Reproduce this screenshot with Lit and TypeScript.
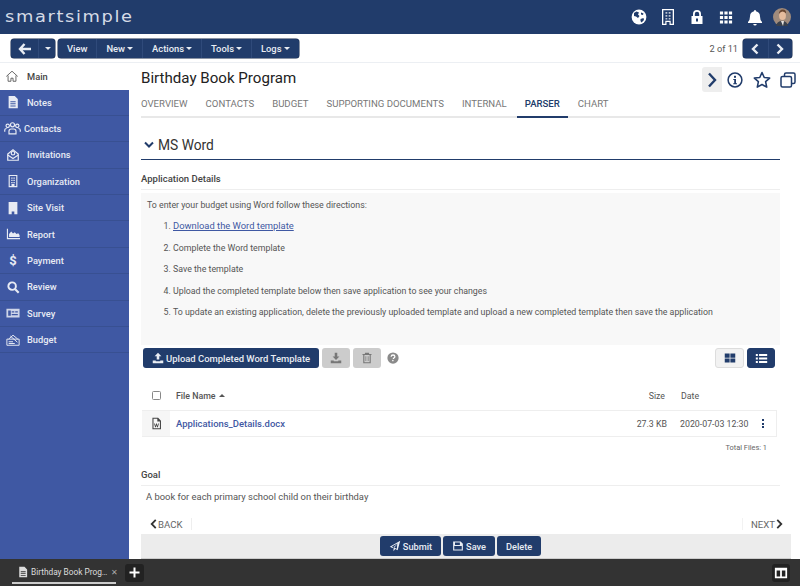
import { LitElement, html, css, svg } from 'lit';
import { customElement } from 'lit/decorators.js';

const icons: Record<string, unknown> = {
  home: svg`<path d="M1.500 8.500 8 2.500l6.500 6M3.500 7.500V14h3.300v-3.500h2.400V14h3.300V7.500" fill="none" stroke="currentColor" stroke-width=".9"/>`,
  notes: svg`<path fill-rule="evenodd" d="M3 1h7l3.500 3.500V15H3zM5 7v1.200h6V7zm0 2.500v1.200h6V9.500zM5 12v1h6v-1z" fill="currentColor"/>`,
  contacts: svg`<g fill="none" stroke="currentColor" stroke-width="1.100"><circle cx="3.500" cy="5.500" r="1.600"/><circle cx="8" cy="4.500" r="1.900"/><circle cx="12.500" cy="5.500" r="1.600"/><path d="M.7 11V9.500q0-1.500 1.800-1.500M15.300 11V9.500q0-1.500-1.800-1.500M4.700 13v-2.500Q4.700 8.500 6.700 8.500h2.600q2 0 2 2V13z"/></g>`,
  invite: svg`<g fill="none" stroke="currentColor" stroke-width="1.400"><path d="M2 7v7h12V7L8 2z"/><path d="m2 8 6 4 6-4"/><circle cx="8" cy="6" r="2"/></g>`,
  org: svg`<path fill-rule="evenodd" d="M3 1h10v14H3zM4.300 2.300V13.700h2V11.500h3.400v2.200h2V2.300zM6 4h1.500v1.500H6zm2.500 0H10v1.500H8.500zM6 6.500h1.500V8H6zm2.500 0H10V8H8.500zM6 9h1.500v1.500H6zm2.500 0H10v1.500H8.500z" fill="currentColor"/>`,
  visit: svg`<path d="M3 1h10v14H9.500v-3h-3v3H3z" fill="currentColor"/>`,
  report: svg`<path d="M1 2h1.300v10.700H16V14H1zM3.500 11.500V8l2.500-3 2 2.500 2-1.500 2 2 2-1 1.500 2v2.500z" fill="currentColor"/>`,
  search: svg`<circle cx="7" cy="7" r="4.300" fill="none" stroke="currentColor" stroke-width="2.200"/><path d="m10.500 10.500 4 4" stroke="currentColor" stroke-width="2.500"/>`,
  survey: svg`<path fill-rule="evenodd" d="M.5 3h15v10H.5zM2.500 5v6h3V5zm4 1v1.500h3V6zm4 0v1.500h3V6zm-4 3v1.500h7V9z" fill="currentColor" opacity=".85"/>`,
  budget: svg`<g fill="none" stroke="currentColor" stroke-width="1.100"><path d="M1 7h14v7H1zM3 7l5-4.500L13.500 7M5 3.500l8 7M3 10h5M3 12h7"/></g>`,
  upload: svg`<path d="M8 1 3.500 5.500H6.300V10h3.400V5.500h2.800zM1 11.300h4v1h6v-1h4V15H1z" fill="currentColor"/>`,
  download: svg`<path d="M6.300 1h3.400v5h2.800L8 10.500 3.500 6h2.800zM1 11.300h4v1h6v-1h4V15H1z" fill="currentColor"/>`,
  trash: svg`<path fill-rule="evenodd" d="M5.500 1h5l.5 1.500h3V4h-1v11H3V4H2V2.500h3zM4.500 4v9.500h7V4zM6 5.500h1v6.500H6zm3 0h1v6.500H9z" fill="currentColor"/>`,
  help: svg`<circle cx="8" cy="8" r="7.500" fill="currentColor"/><path d="M5.500 6.300Q5.700 4 8 4q2.500 0 2.500 2.100 0 1.200-1.300 1.900-.7.400-.7 1.300" fill="none" stroke="#fff" stroke-width="1.700"/><rect x="6.900" y="10.500" width="1.800" height="1.800" fill="#fff"/>`,
  grid: svg`<path d="M1 2h6.500v5.500H1zm7.500 0H15v5.500H8.500zM1 8.500h6.500V14H1zm7.500 0H15V14H8.500z" fill="currentColor"/>`,
  list: svg`<path d="M1 2.500h2.500V5H1zm4 0h10V5H5zM1 6.800h2.500v2.500H1zm4 0h10v2.500H5zM1 11h2.500v2.500H1zM5 11h10v2.500H5z" fill="currentColor"/>`,
  word: svg`<path fill-rule="evenodd" d="M3 1h7l3.500 3.500V15H3zM4.300 2.300v11.400h7.900V5.500H9V2.300zM5 8h1l.8 3 .7-3h1l.7 3 .8-3h1l-1.300 4.500h-1L8 9.800l-.7 2.700h-1z" fill="currentColor"/>`,
  send: svg`<path fill-rule="evenodd" d="M15 1 1 9l3.500 1.500L12 4.500 6 11.300V15l2.300-3 3.200 1.500zM3.800 8.800 11 4.800 10.500 11.800 7.300 10.400z" fill="currentColor"/>`,
  save: svg`<path fill-rule="evenodd" d="M1.500 2h10L14.500 5v9h-13zM4 3.300V6.500h6.500V3.300zM3 8v4.700h10V8z" fill="currentColor"/>`,
  doc: svg`<path fill-rule="evenodd" d="M3 1h7l3.500 3.500V15H3zM5 7v1.200h6.500V7zm0 2.500v1.200h6.500V9.500zM5 12v1h6.500v-1z" fill="currentColor"/>`,
  columns: svg`<path fill-rule="evenodd" d="M1 2h14v12H1zM3 5v7h4V5zm6 0v7h4V5z" fill="currentColor"/>`,
  globe: svg`<circle cx="8" cy="8" r="7.400" fill="currentColor"/><path d="M3 4l2.500-1.500L8 3.500 7 5.500 8.500 7 7 9 5 7.500 3 7zM9.500 10l3-1 .5 2-2.500 2.500-1-1.500zM10 3.500l2.500 1L12 6l-2-.5z" fill="#213c6b"/>`,
  building: svg`<path fill-rule="evenodd" d="M2 0h12v16H9.500v-3h-3v3H2zM3.300 1.300v13.400h2v-3h5.400v3h2V1.300z" fill="currentColor"/><path d="M5.500 3h1.800v1.800H5.500zm3.200 0h1.800v1.800H8.700zM5.500 6h1.800v1.800H5.500zm3.200 0h1.800v1.800H8.700zM5.500 9h1.800v1.500H5.500zm3.200 0h1.800v1.500H8.700z" fill="currentColor" opacity=".7"/>`,
  lock: svg`<path fill-rule="evenodd" d="M4 7V5a4 4 0 0 1 8 0v2h1.500v8h-11V7zm1.800 0h4.400V5a2.200 2.200 0 0 0-4.400 0zM7 9.500V12.500h2V9.500z" fill="currentColor"/>`,
  apps: svg`<path d="M1.500 1.500h3.400v3.400H1.500zm4.800 0h3.400v3.400H6.300zm4.800 0h3.400v3.400h-3.400zM1.500 6.300h3.400v3.400H1.500zm4.800 0h3.400v3.400H6.300zm4.800 0h3.400v3.400h-3.400zM1.500 11.100h3.400v3.400H1.500zm4.800 0h3.400v3.400H6.300zm4.800 0h3.400v3.400h-3.400z" fill="currentColor"/>`,
  bell: svg`<path d="M8 .5q1 0 1 1.200 4 .8 4 5.300 0 3.500 2 5.500v1H1v-1q2-2 2-5.500 0-4.500 4-5.300Q7 .5 8 .5zM6.200 14.500h3.600Q9.500 16 8 16t-1.800-1.500z" fill="currentColor"/>`,
  info: svg`<circle cx="8" cy="8" r="6.900" fill="none" stroke="currentColor" stroke-width="1.500"/><rect x="7" y="3.800" width="2" height="2" fill="currentColor"/><path d="M6.300 7h2.700v4.200h1v1.100H6.200v-1.100h1V8.100h-.9z" fill="currentColor"/>`,
  star: svg`<path d="m8 1.300 2 4.500 4.800.5-3.600 3.200 1 4.800L8 12l-4.200 2.300 1-4.800L1.200 6.300 6 5.800z" fill="none" stroke="currentColor" stroke-width="1.400" stroke-linejoin="round"/>`,
  copy: svg`<g fill="none" stroke="currentColor" stroke-width="1.500"><rect x="1" y="4.500" width="10.500" height="10.500" rx="1.500"/><path d="M4.500 4.500V2.500q0-1.500 1.500-1.500h7.500Q15 1 15 2.500V10q0 1.500-1.500 1.500h-2"/></g>`,
};

const icon = (name: string, size = 14) =>
  html`<svg class="ic" width=${size} height=${size} viewBox="0 0 16 16">${icons[name]}</svg>`;

const chevL = (w = 2.4) => html`<svg class="ic" width="10" height="12" viewBox="0 0 10 12"><path d="M7.500 1.500 3 6l4.500 4.500" fill="none" stroke="currentColor" stroke-width=${w}/></svg>`;
const chevR = (w = 2.4) => html`<svg class="ic" width="10" height="12" viewBox="0 0 10 12"><path d="M2.500 1.500 7 6l-4.500 4.500" fill="none" stroke="currentColor" stroke-width=${w}/></svg>`;
const caret = html`<span class="caret"></span>`;

const NAV: [string, string | null, boolean?][] = [
  ['Notes', 'notes'],
  ['Contacts', 'contacts', true],
  ['Invitations', 'invite'],
  ['Organization', 'org'],
  ['Site Visit', 'visit'],
  ['Report', 'report'],
  ['Payment', null],
  ['Review', 'search'],
  ['Survey', 'survey'],
  ['Budget', 'budget'],
];

const TABS = ['OVERVIEW', 'CONTACTS', 'BUDGET', 'SUPPORTING DOCUMENTS', 'INTERNAL', 'PARSER', 'CHART'];

const STEPS = [
  'Complete the Word template',
  'Save the template',
  'Upload the completed template below then save application to see your changes',
  'To update an existing application, delete the previously uploaded template and upload a new completed template then save the application',
];

@customElement('app-root')
export class AppRoot extends LitElement {
  render() {
    return html`
      <header class="top">
        <div class="logo">smartsimple</div>
        <div class="top-icons">
          ${icon('globe', 16)}${icon('building', 16)}${icon('lock', 16)}${icon('apps', 15)}${icon('bell', 17)}
          <svg class="avatar" width="20" height="20" viewBox="0 0 20 20">
            <circle cx="10" cy="10" r="9" fill="#a08b7c"/>
            <path d="M4 19q1-5 6-5t6 5z" fill="#39404c"/>
            <path d="M9 14h3l-1 5z" fill="#e8e4e0"/>
            <ellipse cx="10.500" cy="8.500" rx="3.400" ry="4.600" fill="#e6bb9c"/>
            <path d="M6.800 7q.5-4.500 4-4.500t3.300 4q-2-2-3.700-2T6.800 7z" fill="#6a4630"/>
          </svg>
        </div>
      </header>

      <div class="toolbar">
        <div class="btn-group">
          <button class="tb wide"><svg class="ic" width="14" height="12" viewBox="0 0 14 12"><path d="M6.500 1 2 6l4.500 5M2.500 6H13" fill="none" stroke="currentColor" stroke-width="2.400"/></svg></button>
          <button class="tb narrow">${caret}</button>
        </div>
        <div class="btn-group">
          <button class="tb">View</button>
          <button class="tb">New${caret}</button>
          <button class="tb">Actions${caret}</button>
          <button class="tb">Tools${caret}</button>
          <button class="tb">Logs${caret}</button>
        </div>
        <span class="pager-text">2 of 11</span>
        <div class="btn-group">
          <button class="tb pager">${chevL()}</button>
          <button class="tb pager">${chevR()}</button>
        </div>
      </div>

      <div class="body">
        <nav class="side">
          <div class="side-main">${icon('home', 14)}<span>Main</span></div>
          ${NAV.map(
            ([label, ic, tight]) => html`<div class="side-item ${tight ? 'tight' : ''}">
              <span class="side-ic">${ic ? icon(ic, tight ? 17 : 14) : html`<b class="dollar">$</b>`}</span>
              <span>${label}</span>
            </div>`
          )}
        </nav>

        <main class="main">
          <div class="title-row">
            <h1>Birthday Book Program</h1>
            <div class="title-actions">
              <span class="ta shaded"><svg class="ic" width="10" height="16" viewBox="0 0 10 16"><path d="M2 1.500 8 8l-6 6.500" fill="none" stroke="currentColor" stroke-width="2.400"/></svg></span>
              <span class="ta">${icon('info', 16)}</span>
              <span class="ta star">${icon('star', 18)}</span>
              <span class="ta">${icon('copy', 16)}</span>
            </div>
          </div>

          <div class="tabs">
            ${TABS.map(t => html`<span class="tab ${t === 'PARSER' ? 'on' : ''}">${t}</span>`)}
          </div>

          <div class="section">
            <svg class="ic" width="10" height="8" viewBox="0 0 10 8"><path d="M1 1.500 5 5.500l4-4" fill="none" stroke="#213c6b" stroke-width="2"/></svg>
            <h2>MS Word</h2>
          </div>

          <div class="label">Application Details</div>

          <div class="directions">
            <p>To enter your budget using Word follow these directions:</p>
            <ol>
              <li><a>Download the Word template</a></li>
              ${STEPS.map(s => html`<li>${s}</li>`)}
            </ol>
          </div>

          <div class="actions">
            <button class="primary">${icon('upload', 12)}Upload Completed Word Template</button>
            <button class="grey">${icon('download', 12)}</button>
            <button class="grey">${icon('trash', 12)}</button>
            <span class="help">${icon('help', 12)}</span>
            <span class="spacer"></span>
            <button class="view">${icon('grid', 12)}</button>
            <button class="view on">${icon('list', 13)}</button>
          </div>

          <div class="file-head">
            <span class="check-cell"><span class="check"></span></span>
            <span class="fname">File Name<span class="up"></span></span>
            <span class="fsize">Size</span>
            <span class="fdate">Date</span>
            <span class="fmenu"></span>
          </div>
          <div class="file-row">
            <span class="check-cell shade">${icon('word', 13)}</span>
            <a class="fname link">Applications_Details.docx</a>
            <span class="fsize">27.3 KB</span>
            <span class="fdate">2020-07-03 12:30</span>
            <span class="fmenu"><i></i><i></i><i></i></span>
          </div>
          <div class="total">Total Files: 1</div>

          <div class="label goal">Goal</div>
          <div class="goal-text">A book for each primary school child on their birthday</div>

          <div class="prevnext">
            <span class="pn back">${chevL(2)}BACK</span>
            <span class="pn next">NEXT${chevR(2)}</span>
          </div>

          <div class="submit-bar">
            <button class="primary sm">${icon('send', 12)}Submit</button>
            <button class="primary sm">${icon('save', 12)}Save</button>
            <button class="primary sm">Delete</button>
          </div>
        </main>
      </div>

      <footer class="dock">
        <div class="dock-tab">
          ${icon('doc', 12)}<span class="dock-title">Birthday Book Prog…</span><span class="dock-x">✕</span>
        </div>
        <span class="dock-add"><svg class="ic" width="11" height="11" viewBox="0 0 11 11"><path d="M5.500 .5v10M.5 5.500h10" stroke="#fff" stroke-width="2"/></svg></span>
        <span class="spacer"></span>
        <span class="dock-layout">${icon('columns', 14)}</span>
      </footer>
    `;
  }

  static styles = css`
    :host {
      display: flex;
      flex-direction: column;
      width: 800px;
      height: 586px;
      overflow: hidden;
      font-family: Roboto, 'Liberation Sans', sans-serif;
      font-size: 9px;
      color: #555;
      background: #fff;
    }
    * { box-sizing: border-box; }
    .ic { display: block; flex: none; }
    button { font-family: inherit; border: 0; padding: 0; margin: 0; }

    .top {
      height: 34px;
      flex: none;
      background: #213c6b;
      display: flex;
      align-items: center;
      justify-content: space-between;
      padding: 0 8px 0 5px;
      color: #fff;
    }
    .logo {
      font-family: 'DejaVu Sans', sans-serif;
      font-size: 15px;
      letter-spacing: 1.35px;
      color: #d5dbe6;
      transform: scaleX(1.19);
      transform-origin: left center;
    }
    .top-icons { display: flex; align-items: center; gap: 13px; }
    .top-icons .ic { width: 16px; }
    .avatar { display: block; margin-left: -3.5px; }

    .toolbar {
      height: 29px;
      flex: none;
      display: flex;
      align-items: center;
      gap: 3px;
      padding: 1px 8px 0 11px;
      border-bottom: 1px solid #eceff3;
    }
    .btn-group {
      display: flex;
      height: 19.500px;
      background: #213c6b;
      border-radius: 3px;
      overflow: hidden;
      box-shadow: 0 0 0 .5px #16294b;
    }
    .tb {
      height: 100%;
      padding: 0 9px;
      background: transparent;
      color: #e9edf3;
      font-size: 9.400px;
      font-weight: 500;
      display: flex;
      align-items: center;
      justify-content: center;
      border-left: 1px solid #2f4a7a;
    }
    .tb:first-child { border-left: 0; }
    .tb.wide { width: 27px; padding: 0; }
    .tb.narrow { width: 17px; padding: 0; }
    .tb.pager { width: 24.500px; padding: 0; }
    .caret {
      display: inline-block;
      margin-left: 2px;
      border: 3.500px solid transparent;
      border-top: 3.500px solid currentColor;
      border-bottom: 0;
    }
    .pager-text { margin-left: auto; margin-right: 2px; font-size: 9.200px; color: #555; }

    .body { flex: 1; display: flex; min-height: 0; }
    .side { width: 129px; flex: none; background: #3f58a3; display: flex; flex-direction: column; }
    .side-main {
      height: 26.500px;
      flex: none;
      background: #fff;
      color: #444;
      display: flex;
      align-items: center;
      gap: 8px;
      padding-left: 5px;
      font-weight: 500;
      font-size: 9.300px;
    }
    .side-item {
      height: 26.400px;
      flex: none;
      display: flex;
      align-items: center;
      padding-left: 6px;
      gap: 7px;
      color: #e8ebf4;
      font-size: 9.300px;
      font-weight: 500;
      border-bottom: 1px solid #385092;
    }
    .side-ic { width: 14px; display: flex; justify-content: center; }
    .side-item.tight { gap: 3px; padding-left: 4px; }
    .side-item.tight .side-ic { width: 17px; }
    .dollar { font-size: 13px; font-weight: 700; line-height: 1; }

    .main {
      flex: 1;
      min-width: 0;
      padding: 0 20px 0 12px;
      display: flex;
      flex-direction: column;
    }
    .title-row { height: 29px; flex: none; display: flex; align-items: center; justify-content: space-between; margin-right: -20px; }
    h1 { margin: 0; font-size: 15.100px; font-weight: 400; color: #222; }
    .title-actions { display: flex; gap: 1px; align-self: flex-end; height: 25px; }
    .ta { width: 24px; display: flex; align-items: center; justify-content: center; color: #213c6b; }
    .ta.star { width: 27px; }
    .ta.shaded { width: 20px; background: #eee; border-radius: 3px 0 0 3px; }
    .tabs {
      height: 26px;
      flex: none;
      display: flex;
      gap: 2px;
      border-bottom: 2px solid #e8e8e8;
    }
    .tab { padding: 6px 8px 0; font-size: 9.600px; line-height: 12px; color: #777; height: 26px; }
    .tab:first-child { padding-left: 0; }
    .tab.on { color: #213c6b; font-weight: 500; border-bottom: 2px solid #213c6b; }

    .section {
      height: 30px;
      margin-top: 12px;
      flex: none;
      display: flex;
      align-items: center;
      gap: 4px;
      padding-left: 3px;
      border-bottom: 1.500px solid #213c6b;
    }
    h2 { margin: 0; font-size: 13.800px; font-weight: 400; color: #333; }
    .label {
      height: 30px;
      flex: none;
      padding-top: 13px;
      font-size: 9.500px;
      font-weight: 500;
      color: #444;
      border-bottom: 1px solid #eee;
      line-height: 12px;
    }
    .directions {
      margin-top: 3px;
      height: 152px;
      flex: none;
      background: #f8f8f8;
      padding: 6px 6px 0;
      color: #555;
      font-size: 8.800px;
    }
    .directions p { margin: 0; line-height: 12px; }
    ol { margin: 9px 0 0; padding: 0 0 0 26px; }
    li { height: 21.600px; line-height: 12px; }
    a { color: #3f58a3; }
    li a { text-decoration: underline; font-size: 9.400px; }

    .actions { height: 20px; margin-top: 3px; flex: none; display: flex; align-items: center; gap: 3px; padding: 0 5px 0 2px; }
    .primary {
      height: 20px;
      background: #213c6b;
      color: #e9edf3;
      font-size: 9.450px;
      font-weight: 500;
      border-radius: 3px;
      display: flex;
      align-items: center;
      gap: 2px;
      padding: 0 9px;
    }
    .grey { width: 28px; height: 20px; background: #ccc; color: #777; border-radius: 3px; display: flex; align-items: center; justify-content: center; }
    .help { color: #8a8a8a; margin-left: 3px; }
    .spacer { flex: 1; }
    .view { width: 29px; height: 20px; background: #f2f2f2; color: #213c6b; border: 1px solid #ddd; border-radius: 3px; display: flex; align-items: center; justify-content: center; }
    .view.on { width: 28px; background: #213c6b; color: #fff; border-color: #213c6b; }

    .file-head, .file-row { display: flex; align-items: center; font-size: 8.800px; flex: none; margin-left: 1px; margin-right: 3px; }
    .file-head { height: 27px; margin-top: 14px; }
    .file-head .fname { font-weight: 500; color: #555; display: flex; align-items: center; gap: 3px; }
    .file-head .fsize { padding-right: 3px; }
    .file-row { height: 27px; border: 1px solid #eee; border-left: 0; margin-top: 1px; }
    .check-cell { width: 28px; height: 100%; flex: none; display: flex; align-items: center; justify-content: center; color: #444; }
    .check-cell.shade { background: #f6f6f6; }
    .check { width: 9px; height: 9px; border: 1px solid #888; border-radius: 1.500px; }
    .fname { margin-left: 6px; flex: 1; }
    .up { border: 3px solid transparent; border-bottom: 3px solid #555; border-top: 0; }
    .link { font-weight: 500; color: #3f58a3; font-size: 9.450px; }
    .fsize { width: 60px; text-align: right; }
    .fdate { width: 88px; padding-left: 13px; white-space: nowrap; }
    .fmenu { width: 15px; margin-right: 6px; display: flex; flex-direction: column; align-items: center; gap: 1.500px; }
    .fmenu i { width: 2px; height: 2px; background: #213c6b; }
    .total { text-align: right; font-size: 7.400px; color: #666; margin-top: 5px; padding-right: 13px; line-height: 12px; flex: none; }

    .label.goal { height: 18px; padding-top: 0; margin-top: 14px; line-height: 14px; }
    .goal-text { font-size: 9.400px; margin-top: 5px; padding-left: 5px; line-height: 12px; flex: none; }

    .prevnext { display: flex; justify-content: space-between; margin-top: 13px; margin-right: -4px; height: 16px; flex: none; align-items: center; font-size: 9.600px; color: #666; }
    .pn { display: flex; align-items: center; height: 12px; }
    .back { padding: 0 9px 0 8px; border-right: 1px solid #eee; }
    .next { padding: 0 0 0 8px; border-left: 1px solid #f2f2f2; }
    .pn .ic { color: #333; width: 9px; }

    .submit-bar {
      flex: 1;
      margin-top: 2px;
      margin-right: -11px;
      padding-right: 11px;
      background: #ececec;
      display: flex;
      align-items: center;
      justify-content: center;
      gap: 2px;
      border-bottom: 1px solid #ccc;
    }
    .primary.sm { font-size: 9.200px; }

    .dock {
      height: 27px;
      flex: none;
      background: #333;
      display: flex;
      align-items: center;
      color: #ddd;
      padding: 0 10px 0 12px;
    }
    .dock-tab {
      width: 104px;
      height: 22px;
      margin-top: 1px;
      display: flex;
      align-items: center;
      gap: 2px;
      padding-left: 5px;
      border-bottom: 2px solid #ccc;
      font-size: 8.300px;
      white-space: nowrap;
    }
    .dock-title { flex: none; }
    .dock-x { color: #aaa; font-size: 8px; margin-left: 2px; }
    .dock-add { margin-left: 9px; width: 19px; height: 18px; background: #222; border-radius: 3px; display: flex; align-items: center; justify-content: center; }
    .dock-layout { width: 18px; height: 18px; background: #222; border-radius: 3px; display: flex; align-items: center; justify-content: center; color: #fff; }
  `;
}
